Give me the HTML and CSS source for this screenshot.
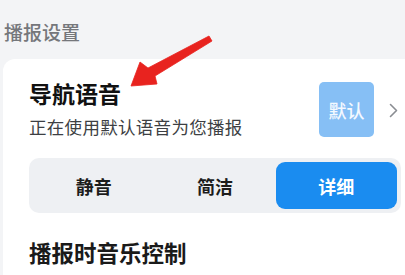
FILE: index.html
```html
<!DOCTYPE html>
<html lang="zh">
<head>
<meta charset="utf-8">
<link rel="stylesheet" href="styles.css">
</head>
<body>
<div class="page">
  <div class="section-title">播报设置</div>
  <div class="card">
    <div class="voice-row">
      <div class="voice-text">
        <div class="voice-title">导航语音</div>
        <div class="voice-sub">正在使用默认语音为您播报</div>
      </div>
      <div class="voice-badge">默认</div>
      <svg class="chevron" width="9" height="15" viewBox="0 0 9 15"><path d="M1.5 1.5 L7.5 7.5 L1.5 13.5" fill="none" stroke="#8a8d92" stroke-width="1.6" stroke-linecap="round" stroke-linejoin="round"/></svg>
    </div>
    <div class="segmented">
      <div class="seg">静音</div>
      <div class="seg">简洁</div>
      <div class="seg seg-active">详细</div>
    </div>
    <div class="music-title">播报时音乐控制</div>
  </div>
  <svg class="arrow" width="405" height="275" viewBox="0 0 405 275">
    <polygon points="209,36 212,41 155,76 157,84 131,86 140,62 148,68" fill="#e8231f" stroke="#e8231f" stroke-width="0.8" stroke-linejoin="round"/>
  </svg>
</div>
</body>
</html>
```
FILE: styles.css
```css
html, body {
  margin: 0;
  padding: 0;
  background: #f3f4f6;
  font-family: "Noto Sans CJK SC", "Noto Sans", sans-serif;
  overflow: hidden;
}
.page {
  position: relative;
  width: 405px;
  height: 275px;
}
.section-title {
  height: 59px;
  box-sizing: border-box;
  padding: 22px 0 0 4px;
  font-size: 19px;
  line-height: 19px;
  color: #75777b;
  font-weight: 500;
}
.card {
  margin-left: 3px;
  background: #ffffff;
  border-radius: 12px 0 0 0;
  padding: 23px 4px 20px 26px;
  height: 216px;
  box-sizing: border-box;
}
.voice-row {
  display: flex;
  align-items: flex-start;
}
.voice-text {
  flex: 1;
}
.voice-title {
  font-size: 23px;
  line-height: 23px;
  font-weight: 700;
  color: #111111;
}
.voice-sub {
  margin-top: 13px;
  font-size: 17.5px;
  line-height: 18px;
  color: #3d3f43;
  letter-spacing: 0.3px;
}
.voice-badge {
  width: 55px;
  height: 55px;
  border-radius: 5px;
  background: #86bff5;
  color: #f4f9ff;
  font-size: 18px;
  font-weight: 500;
  display: flex;
  align-items: center;
  justify-content: center;
}
.chevron {
  margin: 21px 3px 0 15px;
}
.segmented {
  margin-top: 21px;
  height: 55px;
  box-sizing: border-box;
  padding: 4px;
  background: #eef0f3;
  border-radius: 10px;
  display: grid;
  grid-template-columns: 1fr 1fr 1fr;
}
.seg {
  display: flex;
  align-items: center;
  justify-content: center;
  font-size: 18px;
  font-weight: 700;
  color: #1c1c1c;
  border-radius: 9px;
}
.seg-active {
  background: #1a8cf0;
  color: #ffffff;
}
.music-title {
  margin-top: 28px;
  font-size: 22.5px;
  line-height: 23px;
  font-weight: 700;
  color: #1a1a1a;
}
.arrow {
  position: absolute;
  left: 0;
  top: 0;
  pointer-events: none;
}
```
